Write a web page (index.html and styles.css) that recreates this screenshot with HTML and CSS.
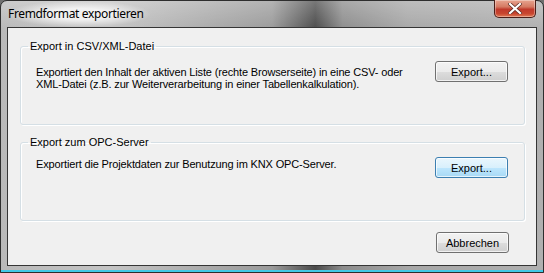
FILE: index.html
```html
<!DOCTYPE html>
<html lang="de">
<head>
  <meta charset="UTF-8">
  <title>Fremdformat exportieren</title>
  <link rel="stylesheet" href="styles.css">
</head>
<body>
  <div class="window">
    <div class="titlebar">
      <span class="title">Fremdformat exportieren</span>
      <button class="close-btn" title="Schließen">
        <svg width="14" height="11" viewBox="0 0 14 11">
          <path d="M2 1 L12 10 M12 1 L2 10" stroke="#5a2a22" stroke-width="3.6" stroke-linecap="square"/>
          <path d="M2 1 L12 10 M12 1 L2 10" stroke="#ffffff" stroke-width="2.2" stroke-linecap="square"/>
        </svg>
      </button>
    </div>

    <div class="client">
      <fieldset class="group">
        <legend>Export in CSV/XML-Datei</legend>
        <div class="group-body">
          <p class="desc desc-low">Exportiert den Inhalt der aktiven Liste (rechte Browserseite) in eine CSV- oder XML-Datei (z.B. zur Weiterverarbeitung in einer Tabellenkalkulation).</p>
          <button class="btn">Export...</button>
        </div>
      </fieldset>

      <fieldset class="group">
        <legend>Export zum OPC-Server</legend>
        <div class="group-body">
          <p class="desc">Exportiert die Projektdaten zur Benutzung im KNX OPC-Server.</p>
          <button class="btn btn-hot">Export...</button>
        </div>
      </fieldset>

      <div class="footer">
        <button class="btn">Abbrechen</button>
      </div>
    </div>
  </div>
</body>
</html>
```

FILE: styles.css
```css
/* Fenster im Win7-Stil */
:root {
  --client-bg: #f0f0f0;
  --text-color: #000000;
  --group-border: #d5dfe5;
  --btn-border: #707070;
  --btn-hot-border: #3c7fb1;
}

* {
  margin: 0;
  padding: 0;
  box-sizing: border-box;
}

body {
  width: 544px;
  height: 273px;
  overflow: hidden;
  background: #6f6f6f;
  font-family: "Liberation Sans", Arial, sans-serif;
  font-size: 11px;
  color: var(--text-color);
}

.window {
  width: 544px;
  height: 273px;
  display: flex;
  flex-direction: column;
  border: 1px solid #2e2e2e;
  border-radius: 7px 7px 0 0;
  background:
    linear-gradient(to bottom, rgba(255, 255, 255, 0.25), rgba(255, 255, 255, 0) 30px),
    linear-gradient(to right, #b9b9b9 0%, #c4c4c4 20%, #9a9a9a 50%, #4a4a4a 58%, #8c8c8c 63%, #a7a7a7 75%, #b0b0b0 100%);
  box-shadow: inset 0 -2px 0 #41c8e6;
}

/* Titelleiste */
.titlebar {
  height: 26px;
  display: flex;
  align-items: flex-start;
  justify-content: space-between;
  padding: 0 7px 0 7px;
}

.title {
  font-family: "Noto Sans", "Open Sans", sans-serif;
  font-size: 12px;
  letter-spacing: -0.35px;
  line-height: 26px;
  padding: 0 6px 0 0;
  color: #000;
  background: radial-gradient(ellipse at center, rgba(255, 255, 255, 0.75) 30%, rgba(255, 255, 255, 0) 72%);
}

.close-btn {
  width: 42px;
  height: 18px;
  margin-top: -1px;
  display: flex;
  align-items: center;
  justify-content: center;
  border: 1px solid #4b1e18;
  border-top: none;
  border-radius: 0 0 5px 5px;
  background: linear-gradient(to bottom, #e7a490 0%, #d57a63 40%, #c0392b 55%, #c8462f 80%, #e07b56 100%);
  box-shadow: inset 0 0 0 1px rgba(255, 255, 255, 0.35);
}

/* Client-Bereich */
.client {
  flex: 1;
  margin: 0 6px 6px 6px;
  border: 1px solid #353535;
  background: var(--client-bg);
  padding: 12px 11px 0 12px;
  display: flex;
  flex-direction: column;
}

.group {
  border: 1px solid var(--group-border);
  border-radius: 3px;
  box-shadow: inset 1px 1px 0 #ffffff, 1px 1px 0 #ffffff;
  padding: 0 16px 0 15px;
  height: 85px;
  margin-bottom: 11px;
}

.group legend {
  margin-left: -8px;
  padding: 0 2px 0 2px;
  line-height: 13px;
  font-size: 11px;
}

.group-body {
  display: flex;
  justify-content: space-between;
  align-items: flex-start;
  padding-top: 8px;
}

.desc {
  width: 378px;
  line-height: 12px;
  letter-spacing: -0.15px;
  margin-top: 1px;
}

.desc-low {
  margin-top: 5px;
}

/* Buttons */
.btn {
  width: 73px;
  height: 21px;
  font-family: "Liberation Sans", Arial, sans-serif;
  font-size: 11px;
  color: #000;
  border: 1px solid var(--btn-border);
  border-radius: 3px;
  background: linear-gradient(to bottom, #f2f2f2 0%, #ebebeb 50%, #dddddd 51%, #cfcfcf 100%);
  box-shadow: inset 0 0 0 1px rgba(255, 255, 255, 0.7);
}

.btn-hot {
  border-color: var(--btn-hot-border);
  background: linear-gradient(to bottom, #eaf6fd 0%, #d9f0fc 50%, #bee6fd 51%, #a7d9f5 100%);
}

.footer {
  display: flex;
  justify-content: flex-end;
  padding-right: 16px;
}
```
